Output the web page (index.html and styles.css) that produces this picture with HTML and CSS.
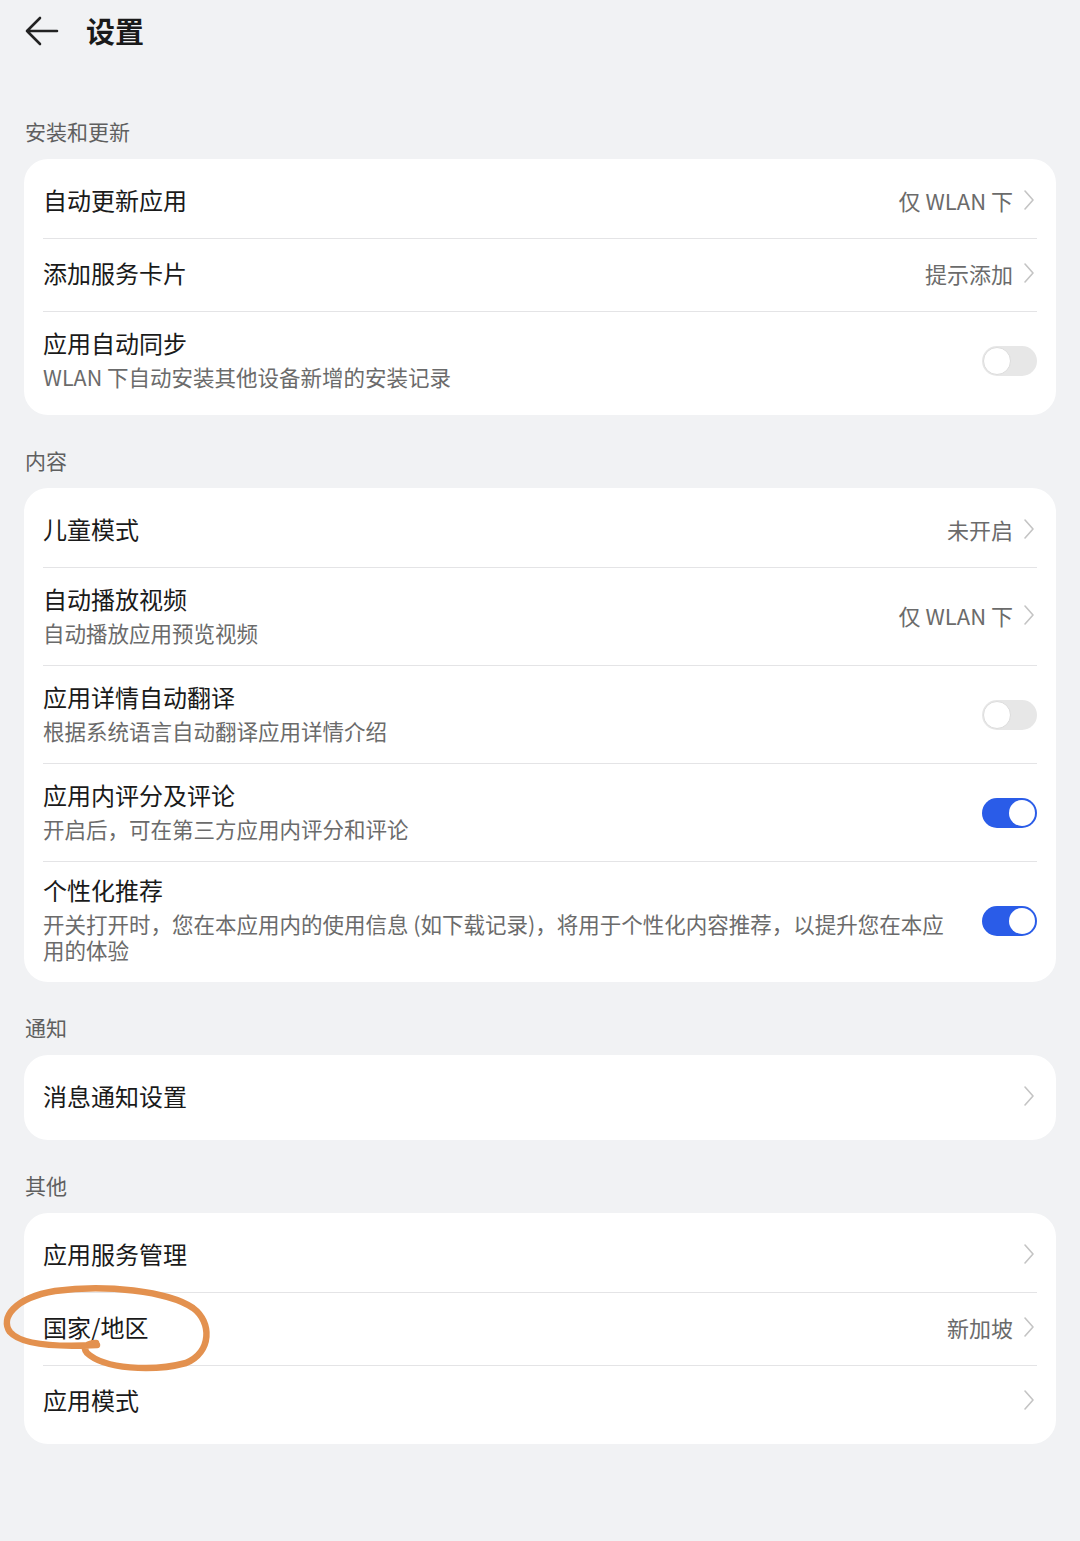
FILE: index.html
```html
<!DOCTYPE html>
<html lang="zh-CN">
<head>
<meta charset="utf-8">
<title>设置</title>
<link rel="stylesheet" href="styles.css">
</head>
<body>
<div class="page">
  <header class="topbar">
    <svg class="back" width="36" height="32" viewBox="0 0 36 32" aria-hidden="true">
      <path d="M3 16 H33 M3 16 L16 3 M3 16 L16 29" fill="none" stroke="#222" stroke-width="2.6" stroke-linecap="round" stroke-linejoin="round"/>
    </svg>
    <h1 class="title">设置</h1>
  </header>

  <div class="section-label">安装和更新</div>
  <div class="card">
    <div class="row">
      <div class="main"><div class="row-title">自动更新应用</div></div>
      <div class="value">仅 WLAN 下</div>
      <svg class="chev" width="14" height="22" viewBox="0 0 14 22"><path d="M3 2 L11 11 L3 20" fill="none" stroke="#c4c4c4" stroke-width="1.6" stroke-linecap="round" stroke-linejoin="round"/></svg>
    </div>
    <div class="row">
      <div class="main"><div class="row-title">添加服务卡片</div></div>
      <div class="value">提示添加</div>
      <svg class="chev" width="14" height="22" viewBox="0 0 14 22"><path d="M3 2 L11 11 L3 20" fill="none" stroke="#c4c4c4" stroke-width="1.6" stroke-linecap="round" stroke-linejoin="round"/></svg>
    </div>
    <div class="row two">
      <div class="main">
        <div class="row-title">应用自动同步</div>
        <div class="row-sub">WLAN 下自动安装其他设备新增的安装记录</div>
      </div>
      <div class="toggle"><span class="knob"></span></div>
    </div>
  </div>

  <div class="section-label">内容</div>
  <div class="card">
    <div class="row">
      <div class="main"><div class="row-title">儿童模式</div></div>
      <div class="value">未开启</div>
      <svg class="chev" width="14" height="22" viewBox="0 0 14 22"><path d="M3 2 L11 11 L3 20" fill="none" stroke="#c4c4c4" stroke-width="1.6" stroke-linecap="round" stroke-linejoin="round"/></svg>
    </div>
    <div class="row two">
      <div class="main">
        <div class="row-title">自动播放视频</div>
        <div class="row-sub">自动播放应用预览视频</div>
      </div>
      <div class="value">仅 WLAN 下</div>
      <svg class="chev" width="14" height="22" viewBox="0 0 14 22"><path d="M3 2 L11 11 L3 20" fill="none" stroke="#c4c4c4" stroke-width="1.6" stroke-linecap="round" stroke-linejoin="round"/></svg>
    </div>
    <div class="row two">
      <div class="main">
        <div class="row-title">应用详情自动翻译</div>
        <div class="row-sub">根据系统语言自动翻译应用详情介绍</div>
      </div>
      <div class="toggle"><span class="knob"></span></div>
    </div>
    <div class="row two">
      <div class="main">
        <div class="row-title">应用内评分及评论</div>
        <div class="row-sub">开启后，可在第三方应用内评分和评论</div>
      </div>
      <div class="toggle on"><span class="knob"></span></div>
    </div>
    <div class="row three">
      <div class="main">
        <div class="row-title">个性化推荐</div>
        <div class="row-sub"><span class="line">开关打开时，您在本应用内的使用信息 (如下载记录)，将用于个性化内容推荐，以提升您在本应</span><span class="line">用的体验</span></div>
      </div>
      <div class="toggle on"><span class="knob"></span></div>
    </div>
  </div>

  <div class="section-label">通知</div>
  <div class="card">
    <div class="row">
      <div class="main"><div class="row-title">消息通知设置</div></div>
      <svg class="chev" width="14" height="22" viewBox="0 0 14 22"><path d="M3 2 L11 11 L3 20" fill="none" stroke="#c4c4c4" stroke-width="1.6" stroke-linecap="round" stroke-linejoin="round"/></svg>
    </div>
  </div>

  <div class="section-label">其他</div>
  <div class="card">
    <div class="row">
      <div class="main"><div class="row-title">应用服务管理</div></div>
      <svg class="chev" width="14" height="22" viewBox="0 0 14 22"><path d="M3 2 L11 11 L3 20" fill="none" stroke="#c4c4c4" stroke-width="1.6" stroke-linecap="round" stroke-linejoin="round"/></svg>
    </div>
    <div class="row">
      <div class="main"><div class="row-title">国家/地区</div></div>
      <div class="value">新加坡</div>
      <svg class="chev" width="14" height="22" viewBox="0 0 14 22"><path d="M3 2 L11 11 L3 20" fill="none" stroke="#c4c4c4" stroke-width="1.6" stroke-linecap="round" stroke-linejoin="round"/></svg>
    </div>
    <div class="row">
      <div class="main"><div class="row-title">应用模式</div></div>
      <svg class="chev" width="14" height="22" viewBox="0 0 14 22"><path d="M3 2 L11 11 L3 20" fill="none" stroke="#c4c4c4" stroke-width="1.6" stroke-linecap="round" stroke-linejoin="round"/></svg>
    </div>
  </div>

  <svg class="annotation" width="1080" height="1541" viewBox="0 0 1080 1541" aria-hidden="true">
    <path d="M97 1345 C60 1347 22 1346 10 1332 C0 1318 14 1298 55 1291 C105 1284 168 1291 193 1308 C212 1322 212 1352 186 1363 C152 1372 104 1369 87 1353 C82 1347 88 1343 96 1343" fill="none" stroke="#e3914f" stroke-width="6.5" stroke-linecap="round" stroke-linejoin="round"/>
  </svg>
</div>
</body>
</html>
```

FILE: styles.css
```css
* { box-sizing: border-box; }

html, body {
  margin: 0;
  padding: 0;
  background: #f1f2f4;
}

body {
  font-family: "Noto Sans CJK SC", "Noto Sans", sans-serif;
  color: #1a1a1a;
  min-height: 1541px;
}

.page {
  position: relative;
  padding-bottom: 96px;
}

.topbar {
  height: 62px;
  display: flex;
  align-items: center;
  padding-left: 24px;
  padding-bottom: 2px;
  margin-bottom: 24px;
}

.back {
  display: block;
  margin-top: 2px;
}

.title {
  margin: 0 0 0 26px;
  font-size: 29px;
  font-weight: 700;
  line-height: 40px;
  color: #1a1a1a;
}

.section-label {
  padding: 31px 25px 14px;
  font-size: 21px;
  line-height: 28px;
  color: #5f5f5f;
}

.card {
  margin: 0 24px;
  background: #ffffff;
  border-radius: 24px;
  padding: 6px 19px;
}

.row {
  display: flex;
  align-items: center;
  min-height: 73px;
  padding: 12px 0 16px;
  border-top: 1px solid #e4e4e6;
}

.row:first-child {
  border-top: none;
}

.row.two {
  min-height: 98px;
}

.row.three {
  padding: 12px 0 13px;
}

.main {
  flex: 1;
  min-width: 0;
}

.row-title {
  font-size: 24px;
  line-height: 32px;
  color: #1a1a1a;
}

.row-sub {
  margin-top: 5px;
  font-size: 21.5px;
  line-height: 26px;
  color: #6b6b6b;
}

.row-sub .line {
  display: block;
  white-space: nowrap;
}

.value {
  font-size: 22px;
  line-height: 28px;
  color: #6b6b6b;
  margin-left: 20px;
  white-space: nowrap;
}

.chev {
  display: block;
  margin-left: 9px;
  margin-right: 1px;
  flex: none;
}

.toggle {
  flex: none;
  position: relative;
  width: 55px;
  height: 30px;
  border-radius: 15px;
  background: #e7e7e7;
  margin-left: 24px;
  margin-top: 4px;
}

.knob {
  position: absolute;
  top: 1px;
  left: 1px;
  width: 28px;
  height: 28px;
  border-radius: 50%;
  background: #ffffff;
  border: 1.5px solid #dcdcdc;
}

.toggle.on {
  background: #2a5ce8;
}

.toggle.on .knob {
  top: 2px;
  left: auto;
  right: 2px;
  width: 26px;
  height: 26px;
  border: none;
}

.annotation {
  position: absolute;
  top: 0;
  left: 0;
  pointer-events: none;
}
```
